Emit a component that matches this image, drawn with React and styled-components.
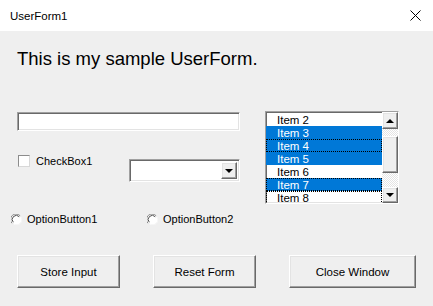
import React from 'react'
import styled, { createGlobalStyle, css } from 'styled-components'

const GlobalStyle = createGlobalStyle`
  html, body {
    margin: 0;
    padding: 0;
    background: #efefef;
  }
  body {
    font-family: "Liberation Sans", Arial, sans-serif;
    color: #000;
  }
`

const sunken = css`
  border-style: solid;
  border-width: 1px;
  border-color: #a0a0a0 #ffffff #ffffff #a0a0a0;
  box-shadow: inset 1px 1px 0 #696969, inset -1px -1px 0 #e3e3e3;
`

const raised = css`
  border-style: solid;
  border-width: 1px;
  border-color: #ffffff #696969 #696969 #ffffff;
  box-shadow: inset -1px -1px 0 #a0a0a0, inset 1px 1px 0 #e3e3e3;
`

const Window = styled.div`
  width: 433px;
  height: 306px;
  display: flex;
  flex-direction: column;
  background: #efefef;
  overflow: hidden;
`

const TitleBar = styled.div`
  height: 31px;
  flex: none;
  background: #ffffff;
  display: flex;
  align-items: center;
  justify-content: space-between;
  padding: 1px 12px 0 10px;
  box-sizing: border-box;
  font-size: 11.5px;
`

const CloseIcon = styled.svg`
  width: 11px;
  height: 11px;
  margin-top: -2px;
`

const Heading = styled.h1`
  margin: 17px 0 0 17px;
  font-size: 18.5px;
  line-height: 22px;
  font-weight: normal;
`

const MainGrid = styled.div`
  margin-top: 41px;
  display: grid;
  grid-template-columns: 223px 134px;
  column-gap: 25px;
  padding-left: 17px;
`

const LeftCol = styled.div`
  display: flex;
  flex-direction: column;
`

const TextBox = styled.div`
  ${sunken};
  box-sizing: border-box;
  height: 19px;
  margin-top: 1px;
  background: #fff;
`

const CheckRow = styled.div`
  display: flex;
  align-items: flex-start;
  margin-top: 24px;
`

const CheckLabel = styled.label`
  display: flex;
  align-items: center;
  gap: 6px;
  font-size: 11px;
  margin-left: 1px;
  width: 111px;
`

const CheckBox = styled.span`
  box-sizing: border-box;
  width: 12px;
  height: 12px;
  background: #fff;
  border: 1px solid #8c8c8c;
  border-right-color: #d8d8d8;
  border-bottom-color: #d8d8d8;
`

const Combo = styled.div`
  ${sunken};
  box-sizing: border-box;
  width: 111px;
  height: 23px;
  margin-top: 4px;
  background: #fff;
  display: flex;
  justify-content: flex-end;
  padding: 2px;
`

const ArrowButton = styled.div`
  ${raised};
  box-sizing: border-box;
  width: ${p => p.$w || 16}px;
  height: ${p => p.$h || 17}px;
  background: #efefef;
  display: flex;
  align-items: center;
  justify-content: center;
  flex: none;
`

const Triangle = styled.span`
  width: 0;
  height: 0;
  border-left: 4px solid transparent;
  border-right: 4px solid transparent;
  ${p => (p.$up ? 'border-bottom: 4px solid #000;' : 'border-top: 4px solid #000;')}
`

const ListBox = styled.div`
  ${sunken};
  box-sizing: border-box;
  height: 93px;
  background: #fff;
  display: flex;
  overflow: hidden;
`

const Items = styled.div`
  flex: 1;
  padding-top: 1px;
`

const Item = styled.div`
  box-sizing: border-box;
  height: 13px;
  line-height: 12px;
  font-size: 11.5px;
  padding-left: 10px;
  background: ${p => (p.$selected ? '#0078d7' : 'transparent')};
  color: ${p => (p.$selected ? '#fff' : '#000')};
  border: 1px dotted ${p => (p.$focus ? '#000' : 'transparent')};
`

const ScrollBar = styled.div`
  width: 16px;
  flex: none;
  display: flex;
  flex-direction: column;
  background-color: #f4f4f4;
  background-image: repeating-conic-gradient(#ffffff 0 25%, #e4e4e4 0 50%);
  background-size: 2px 2px;
`

const Thumb = styled.div`
  ${raised};
  box-sizing: border-box;
  height: 37px;
  margin-top: 7px;
  background: #efefef;
`

const Spacer = styled.div`
  flex: 1;
`

const OptionRow = styled.div`
  display: flex;
  margin-top: 9px;
  padding-left: 11px;
`

const OptionLabel = styled.label`
  display: flex;
  align-items: center;
  gap: 5px;
  font-size: 11px;
  width: ${p => p.$w}px;
`

const Radio = styled.svg`
  width: 11px;
  height: 11px;
  flex: none;
`

const ButtonRow = styled.div`
  display: flex;
  margin-top: 30px;
  padding-left: 17px;
  gap: 33px;
`

const Button = styled.button`
  ${raised};
  box-sizing: border-box;
  width: ${p => p.$w}px;
  height: 33px;
  background: #efefef;
  font-family: "Liberation Sans", Arial, sans-serif;
  font-size: 11.5px;
  color: #000;
  padding: 0;
`

const items = [
  { label: 'Item 2' },
  { label: 'Item 3', selected: true },
  { label: 'Item 4', selected: true, focus: true },
  { label: 'Item 5', selected: true },
  { label: 'Item 6' },
  { label: 'Item 7', selected: true, focus: true },
  { label: 'Item 8', focus: true },
]

function RadioIcon() {
  return (
    <Radio viewBox="0 0 12 12">
      <circle cx="6" cy="6" r="5.5" fill="#fff" />
      <path d="M10 2 A5.5 5.5 0 0 0 1 10" stroke="#808080" strokeWidth="1" fill="none" />
      <path d="M9 3 A4.2 4.2 0 0 0 2.5 9" stroke="#404040" strokeWidth="1" fill="none" />
      <path d="M10.5 3 A5.5 5.5 0 0 1 2.5 10.5" stroke="#f8f8f8" strokeWidth="1" fill="none" />
    </Radio>
  )
}

export default function App() {
  return (
    <>
      <GlobalStyle />
      <Window>
        <TitleBar>
          <span>UserForm1</span>
          <CloseIcon viewBox="0 0 11 11">
            <path d="M0.5 0.5 L10.5 10.5 M10.5 0.5 L0.5 10.5" stroke="#000" strokeWidth="1" />
          </CloseIcon>
        </TitleBar>
        <Heading>This is my sample UserForm.</Heading>
        <MainGrid>
          <LeftCol>
            <TextBox />
            <CheckRow>
              <CheckLabel>
                <CheckBox />
                CheckBox1
              </CheckLabel>
              <Combo>
                <ArrowButton $w={16} $h={17}>
                  <Triangle />
                </ArrowButton>
              </Combo>
            </CheckRow>
          </LeftCol>
          <ListBox>
            <Items>
              {items.map(it => (
                <Item key={it.label} $selected={it.selected} $focus={it.focus}>
                  {it.label}
                </Item>
              ))}
            </Items>
            <ScrollBar>
              <ArrowButton $w={16} $h={17}>
                <Triangle $up />
              </ArrowButton>
              <Thumb />
              <Spacer />
              <ArrowButton $w={16} $h={16}>
                <Triangle />
              </ArrowButton>
            </ScrollBar>
          </ListBox>
        </MainGrid>
        <OptionRow>
          <OptionLabel $w={136}>
            <RadioIcon />
            OptionButton1
          </OptionLabel>
          <OptionLabel $w={120}>
            <RadioIcon />
            OptionButton2
          </OptionLabel>
        </OptionRow>
        <ButtonRow>
          <Button $w={103}>Store Input</Button>
          <Button $w={103}>Reset Form</Button>
          <Button $w={127}>Close Window</Button>
        </ButtonRow>
      </Window>
    </>
  )
}
